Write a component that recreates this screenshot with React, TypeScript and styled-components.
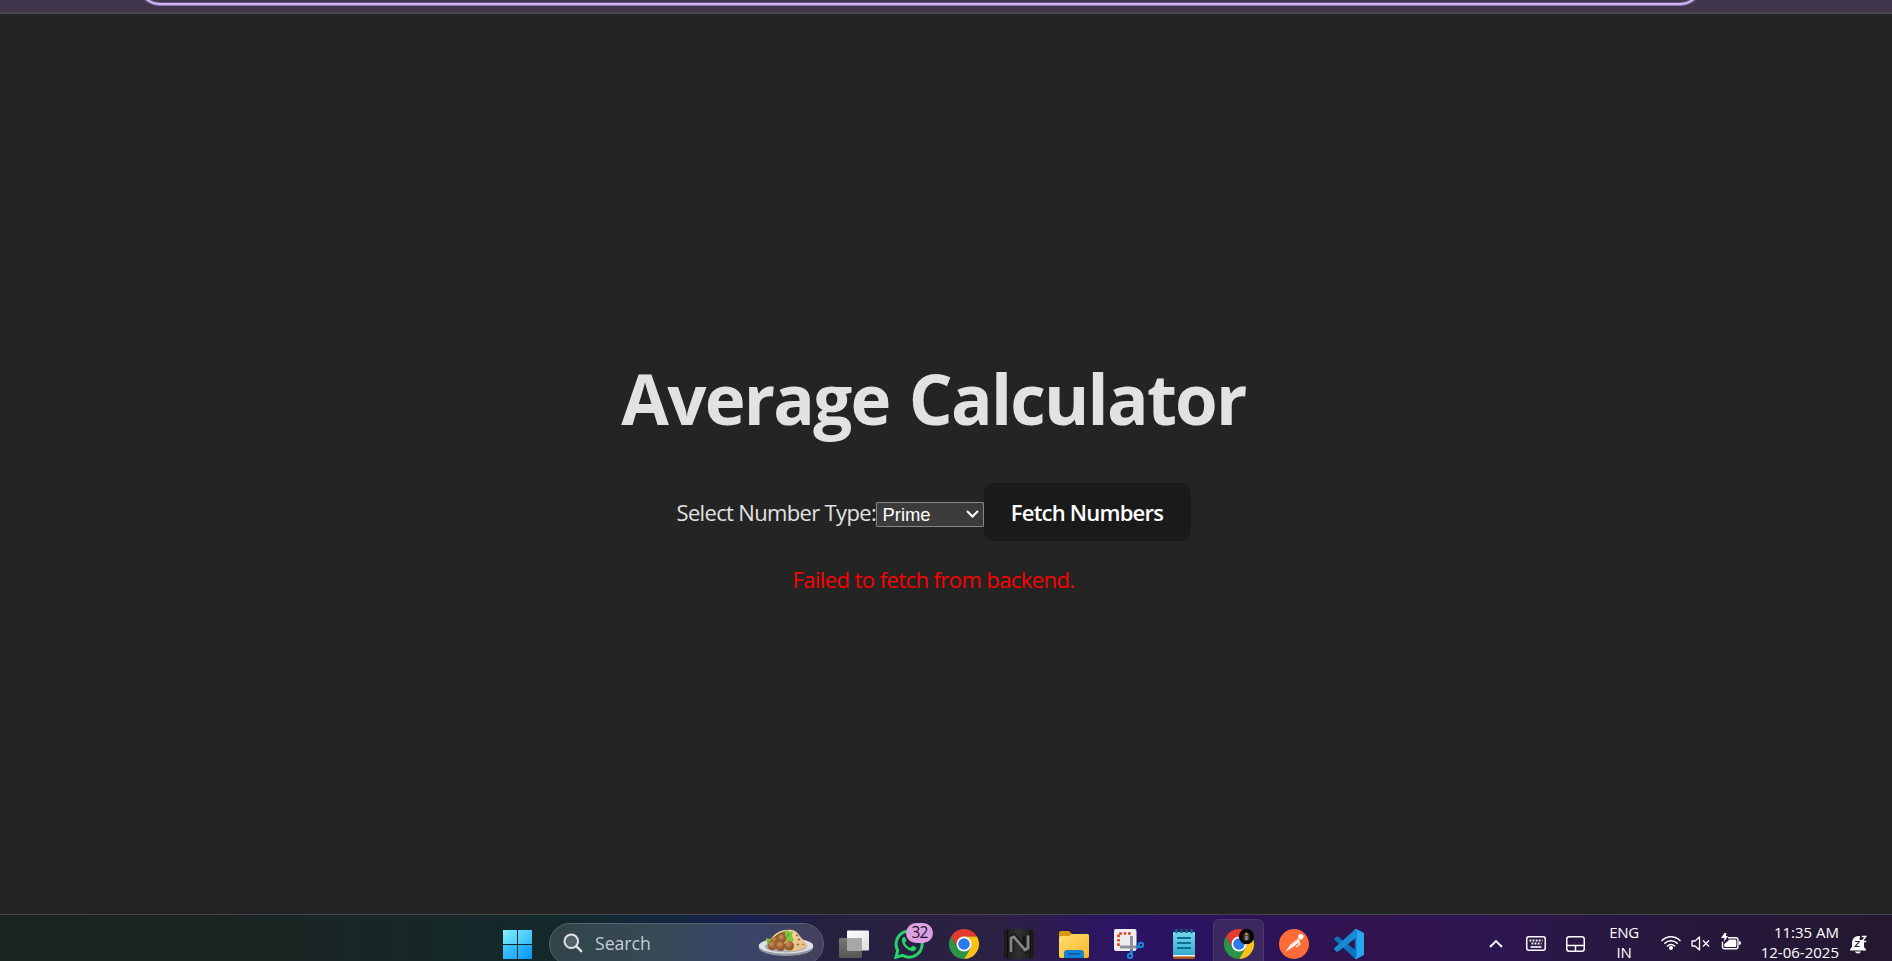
import React from "react";
import styled, { createGlobalStyle } from "styled-components";

const GlobalStyle = createGlobalStyle`
  * { box-sizing: border-box; }
  html, body { margin: 0; padding: 0; background: #242424; overflow: hidden; }
`;

const Screen = styled.div`
  display: flex;
  flex-direction: column;
  width: 1892px;
  height: 961px;
  overflow: hidden;
  background: #242424;
  font-family: "Open Sans", "Noto Sans", sans-serif;
`;

const BrowserBar = styled.header`
  flex: none;
  height: 14px;
  overflow: hidden;
  background: #40374d;
  border-bottom: 2px solid #48454e;
  display: flex;
  align-items: flex-end;
  padding: 0 190px 7px 138px;
`;

const AddressField = styled.div`
  flex: 1;
  height: 44px;
  border: 2px solid #d0b7fb;
  border-radius: 22px;
  box-shadow: 0 0 0 1px rgba(190, 160, 240, 0.6), inset 0 0 0 1px rgba(190, 160, 240, 0.25);
`;

const Page = styled.main`
  flex: 1;
  min-height: 0;
  display: flex;
  flex-direction: column;
  align-items: center;
  padding: 345px 25px 0 0;
  color: #e2e2e2;
`;

const Title = styled.h1`
  margin: 0;
  height: 78px;
  font-size: 69px;
  line-height: 78px;
  font-weight: 700;
  letter-spacing: -1.73px;
  word-spacing: 3px;
  white-space: nowrap;
`;

const Controls = styled.div`
  margin-top: 46px;
  height: 58px;
  display: flex;
  align-items: center;
`;

const Label = styled.label`
  width: 199px;
  font-size: 22px;
  line-height: 33px;
  letter-spacing: -0.66px;
  white-space: nowrap;
`;

const Select = styled.div`
  width: 108px;
  height: 25px;
  margin-top: 4px;
  padding: 0 4px 0 6px;
  display: flex;
  align-items: center;
  justify-content: space-between;
  background: #3b3b3b;
  border: 1px solid #858585;
  border-radius: 1px;
  color: #fff;
  font: 18.4px/23px "Liberation Sans", Arial, sans-serif;
`;

const FetchButton = styled.button`
  width: 207px;
  height: 58px;
  padding: 0;
  border: 0;
  border-radius: 11px;
  background: #1a1a1a;
  color: #fff;
  font: 600 22px/33px "Open Sans", "Noto Sans", sans-serif;
  letter-spacing: -0.78px;
  white-space: nowrap;
`;

const ErrorText = styled.p`
  margin: 22px 0 0;
  font-size: 22px;
  line-height: 33px;
  letter-spacing: -0.58px;
  color: #f00;
`;

const Taskbar = styled.footer`
  flex: none;
  height: 47px;
  overflow: hidden;
  display: flex;
  align-items: flex-start;
  border-top: 1px solid #45434b;
  background: linear-gradient(90deg, #1c2421 0, #1a2624 300px, #14292b 560px, #14253f 680px, #171f50 750px, #27203f 830px, #2c2144 1000px, #2c1466 1120px, #2c1360 1190px, #31134e 1370px, #2e1551 1480px, #291842 1600px, #23182f 1892px);
`;

const StartSlot = styled.div`
  margin: 15px 17px 0 503px;
  width: 29px;
  height: 29px;
  display: grid;
  grid-template-columns: 14px 14px;
  grid-template-rows: 14px 14px;
  gap: 1px;
`;

const Pane = styled.i<{ $from: string; $to: string }>`
  background: linear-gradient(135deg, ${(p) => p.$from}, ${(p) => p.$to});
`;

const SearchPill = styled.div`
  flex: none;
  width: 275px;
  height: 42px;
  margin-top: 8px;
  padding: 0 9px 2px 13px;
  display: flex;
  align-items: center;
  border-radius: 21px;
  border: 1px solid #53646e;
  background: linear-gradient(90deg, #33444a, #364a56 40%, #394569 70%, #45405d);
  color: #c6ced4;
  font-size: 17.6px;
`;

const SearchWord = styled.span`
  flex: 1;
  margin-left: 12px;
`;

const Apps = styled.nav`
  display: flex;
  margin-left: 2px;
`;

const AppSlot = styled.div<{ $active?: boolean }>`
  position: relative;
  width: 51px;
  height: 50px;
  margin: 4px 2px 0;
  display: flex;
  justify-content: center;
  padding-top: 9px;
  border-radius: 6px;
  border: 1px solid ${(p) => (p.$active ? "#49366a" : "transparent")};
  background: ${(p) => (p.$active ? "#3c2761" : "transparent")};
`;

const Badge = styled.span`
  position: absolute;
  left: 22px;
  top: 3px;
  width: 27px;
  height: 20px;
  border-radius: 10px;
  background: #dda0e3;
  color: #21172a;
  font-size: 15.5px;
  line-height: 19px;
  letter-spacing: -0.8px;
  text-align: center;
`;

const Tray = styled.div`
  flex: 1;
  display: flex;
  align-items: flex-start;
  color: #fff;
`;

const TrayIcon = styled.div<{ $left: number; $top: number }>`
  flex: none;
  margin: ${(p) => p.$top}px 0 0 ${(p) => p.$left}px;
  line-height: 0;
`;

const TrayText = styled.div<{ $left: number; $width: number; $align: string; $spacing?: number }>`
  flex: none;
  margin: 7px 0 0 ${(p) => p.$left}px;
  width: ${(p) => p.$width}px;
  text-align: ${(p) => p.$align};
  font-size: 15px;
  line-height: 20px;
  letter-spacing: ${(p) => p.$spacing ?? 0}px;
  white-space: nowrap;
`;

const SearchIcon = () => (
  <svg width="20" height="20" viewBox="0 0 20 20" fill="none" stroke="#dfe4e7" strokeWidth="2">
    <circle cx="8.3" cy="8.3" r="6.8" fill="#53616a" />
    <path d="m13.2 13.2 5 5" strokeWidth="2.4" strokeLinecap="round" />
  </svg>
);

const FoodPlate = () => (
  <svg width="56" height="28" viewBox="0 0 56 28">
    <defs>
      <radialGradient id="ball" cx="40%" cy="30%">
        <stop offset="0" stopColor="#d0935a" />
        <stop offset="1" stopColor="#92592b" />
      </radialGradient>
      <linearGradient id="wrap" x2="1" y2="1">
        <stop offset="0" stopColor="#fae3b8" />
        <stop offset="1" stopColor="#e3b97f" />
      </linearGradient>
    </defs>
    <ellipse cx="28" cy="18.5" rx="27.3" ry="8.5" fill="#9295a2" />
    <ellipse cx="28" cy="16.8" rx="27.3" ry="7.8" fill="#dfe1e8" />
    <ellipse cx="28" cy="17.5" rx="21" ry="5.9" fill="#a9adba" />
    <path d="M13 9Q21 0 32 .8q5 0 8 4l10 12q-8 7-22 5Z" fill="url(#wrap)" />
    <path d="M15 9q7-7 15-7l-3 7-9 4Z" fill="#8c6230" />
    <path d="m27 2 3-1 1 2 4-1-1 5 2 4-4 4-5-5ZM8 9l4 1 4-2-1 5-5 5-1-4Z" fill="#7fc83b" />
    <path d="m29 6 3-3-2 6ZM10 12l4-1-3 3Z" fill="#55a333" />
    <g fill="url(#ball)">
      <circle cx="16.5" cy="11.5" r="3.8" />
      <circle cx="24" cy="9.7" r="4.5" />
      <circle cx="14.3" cy="16.8" r="4.5" />
      <circle cx="31.2" cy="16.8" r="4.8" />
      <circle cx="22.5" cy="17.2" r="4.9" />
    </g>
    <path d="m38 6 2 1m0 4 2-1m-3 6 2-1m4 1 1-1" stroke="#9c683b" strokeWidth="1.4" />
  </svg>
);

const TaskViewIcon = () => (
  <svg width="30" height="30" viewBox="0 0 30 30">
    <defs>
      <linearGradient id="tv" x2="1" y2="1">
        <stop offset="0" stopColor="#fff" /><stop offset="1" stopColor="#dedede" />
      </linearGradient>
      <linearGradient id="tvBack" x2="0" y2="1">
        <stop offset="0" stopColor="#777" /><stop offset="1" stopColor="#555" />
      </linearGradient>
    </defs>
    <rect y="9" width="23" height="20" rx="1" fill="url(#tvBack)" />
    <rect x="8" y="1.5" width="22" height="20" rx="1" fill="url(#tv)" />
    <path d="M8 9h14q1 0 1 1v11.5H8Z" fill="#a7a7a7" />
  </svg>
);

const WhatsAppIcon = () => (
  <svg width="30" height="30" viewBox="0 0 30 30">
    <path d="M2 28.2 3.8 21.5A13 13 0 1 1 8.7 26.4Z" fill="none" stroke="#25d366" strokeWidth="3" />
    <path d="M10.2 7.8c-.6 0-2.5 1.2-2.4 3.7.1 4.8 6.4 10.4 10.6 10.7 2.3.1 4-1.4 4-3.3 0-.7-3.2-2.3-3.8-2.2-.8 0-1.5 2.2-2.3 2-1.9-.3-5-3.4-5.2-5 0-.7 1.4-1.3 1.3-2.1-.1-.7-1.3-3.8-2.2-3.8Z" fill="#25d366" />
  </svg>
);

const ChromeIcon = ({ avatar = false }: { avatar?: boolean }) => (
  <svg width="30" height="30" viewBox="0 0 48 48" overflow="visible">
    <path d="M3.2 12a24 24 0 0 1 41.6 0H24L13.6 30Z" fill="#e33b2e" />
    <path d="M44.8 12A24 24 0 0 1 24 48L34.4 30 24 12Z" fill="#fbc116" />
    <path d="M24 48A24 24 0 0 1 3.2 12L13.6 30h20.8Z" fill="#2a9547" />
    <circle cx="24" cy="24" r="12" fill="#fff" />
    <circle cx="24" cy="24" r="9.3" fill="#2b79ed" />
    {avatar && (
      <g>
        <circle cx="36" cy="12" r="12.3" fill="#080706" />
        <path d="M31 9q5-8 10 0v9H31Z" fill="#4a3828" />
        <circle cx="36" cy="8" r="2.2" fill="#b58847" />
        <path d="M34 11h4v7h-4Z" fill="#8d8794" />
      </g>
    )}
  </svg>
);

const NIcon = () => (
  <svg width="30" height="30" viewBox="0 0 30 30">
    <defs>
      <linearGradient id="nbg"><stop offset="0" stopColor="#1b1b1b" /><stop offset=".5" stopColor="#303030" /><stop offset="1" stopColor="#1b1b1b" /></linearGradient>
    </defs>
    <rect width="30" height="30" rx="4" fill="url(#nbg)" />
    <path d="M3.5 1v28M26.5 1v28" stroke="#0d0d0d" />
    <path d="M7 23V9l3-1.5 11 12V7" fill="none" stroke="#171717" strokeWidth="5" />
    <path d="M7 23V9l3-1 11 13 3-2V6.5" fill="none" stroke="#858585" strokeWidth="2.8" />
  </svg>
);

const FolderIcon = () => (
  <svg width="30" height="30" viewBox="0 0 30 30">
    <defs>
      <linearGradient id="folder" x2="1" y2="1"><stop offset="0" stopColor="#ffdf70" /><stop offset="1" stopColor="#fcb827" /></linearGradient>
    </defs>
    <path d="M0 4q0-2 2-2h8l3 3h15q2 0 2 2v6H0Z" fill="#dc9700" />
    <path d="M0 9q0-2 2-2h8l3-2h15q2 0 2 2v20q0 2-2 2H2q-2 0-2-2Z" fill="url(#folder)" />
    <path d="M5 29v-5q0-3 3-3h14q3 0 3 3v5Z" fill="#1682d4" />
    <path d="M9 24.8h12" stroke="#0850a0" strokeWidth="1.4" />
  </svg>
);

const SnipIcon = () => (
  <svg width="30" height="30" viewBox="0 0 30 30">
    <rect width="22.5" height="22" rx="2" fill="#eeedf0" />
    <path d="M4.5 17V4.5H17" fill="none" stroke="#db4220" strokeWidth="2.7" strokeDasharray="2.7 1.7" />
    <path d="M17.5 7v16M6 18h16" stroke="#8e9499" strokeWidth="3" />
    <path d="M22 18h3" stroke="#1583d3" strokeWidth="3" />
    <path d="M17.5 21v4" stroke="#1583d3" strokeWidth="3" />
    <circle cx="27" cy="16" r="2.2" fill="none" stroke="#1888dd" strokeWidth="2" />
    <circle cx="16" cy="27" r="2.2" fill="none" stroke="#1888dd" strokeWidth="2" />
  </svg>
);

const NotepadIcon = () => (
  <svg width="30" height="30" viewBox="0 0 30 30">
    <defs><linearGradient id="note" x2="0" y2="1"><stop offset="0" stopColor="#72d9ed" /><stop offset="1" stopColor="#36a9c9" /></linearGradient></defs>
    <path d="M4 3h22v24H4Z" fill="url(#note)" />
    <path d="M4 26h22v2q0 2-2 2H6q-2 0-2-2Z" fill="#a85518" />
    <path d="M4 26h22v1.5H4Z" fill="#f4f5f5" />
    <path d="M8 9h14M8 14h14M8 19h14" stroke="#087193" strokeWidth="2" />
    <path d="M7.5 3V1m5 2V1m5 2V1m5 2V1" stroke="#176681" strokeWidth="2.5" strokeLinecap="round" />
  </svg>
);

const PostmanIcon = () => (
  <svg width="30" height="30" viewBox="0 0 30 30">
    <circle cx="15" cy="15" r="15" fill="#ff6c37" />
    <circle cx="21.8" cy="7.8" r="2.7" fill="#fff" />
    <path d="m19 9.5-7.5 6 2.7 2.4 7-6Z" fill="#fff" />
    <path d="m11.5 15.5-5 7.3 7.7-5Z" fill="#fff" />
    <path d="m19 13 2 2-4 3" fill="none" stroke="#fff" strokeWidth="1.2" />
    <path d="M19 10.5 13 16" stroke="#f3a184" strokeWidth=".8" />
  </svg>
);

const VSCodeIcon = () => (
  <svg width="30" height="30" viewBox="0 0 100 100">
    <path d="m75 1 20 10q5 2 5 7v64q0 5-5 7L75 99q-4 2-7-2L2 37q-3-3 0-6l6-5q3-2 6 0l55 42V32L14 74q-3 2-6 0l-6-5q-3-3 0-6L68 3q3-4 7-2Z" fill="#0b75bc" />
    <path d="m75 1 20 10q5 2 5 7v64q0 5-5 7L75 99q-4 2-7-2l7-3V6l-7-3q3-4 7-2Z" fill="#29a6f2" />
    <path d="m2 63 66-60q7 3 7 13v12L14 74q-3 2-6 0l-6-5q-3-3 0-6Z" fill="#1989d2" />
  </svg>
);

const ChevronUp = () => (
  <svg width="14" height="8" viewBox="0 0 14 8" fill="none" stroke="#fff" strokeWidth="1.8"><path d="m1 7 6-6 6 6" /></svg>
);

const SelectArrow = () => (
  <svg width="13" height="8" viewBox="0 0 13 8" fill="none" stroke="#fff" strokeWidth="2"><path d="m1 1 5.5 5.5L12 1" /></svg>
);

const KeyboardIcon = () => (
  <svg width="20" height="15" viewBox="0 0 20 15" fill="none" stroke="#fff">
    <rect x=".75" y=".75" width="18.5" height="13.5" rx="2" strokeWidth="1.5" />
    <path d="M3.5 4.5h13M5.5 7.5h10" strokeWidth="1.8" strokeDasharray="1.8 1.3" />
    <path d="M4.5 11h11" strokeWidth="1.6" />
  </svg>
);

const TouchpadIcon = () => (
  <svg width="19" height="16" viewBox="0 0 19 16" fill="none" stroke="#fff" strokeWidth="1.5">
    <rect x=".75" y=".75" width="17.5" height="14.5" rx="2.5" /><path d="M1 9.5h17M9.5 9.5V15" />
  </svg>
);

const WifiIcon = () => (
  <svg width="20" height="15" viewBox="0 0 20 15" fill="none" stroke="#fff" strokeWidth="1.6" strokeLinecap="round">
    <path d="M1 5.5a12.6 12.6 0 0 1 18 0M3.8 8.3a8.7 8.7 0 0 1 12.4 0M6.5 11a5 5 0 0 1 7 0" />
    <circle cx="10" cy="13" r="1.2" fill="#fff" />
  </svg>
);

const MutedIcon = () => (
  <svg width="19" height="15" viewBox="0 0 19 15" fill="none" stroke="#fff" strokeWidth="1.3">
    <path d="M1 5h3l4.5-4v13L4 10H1Z" strokeLinejoin="round" /><path d="m12 4.5 6 6m0-6-6 6" />
  </svg>
);

const BatteryIcon = () => (
  <svg width="20" height="17" viewBox="0 0 20 17">
    <path d="M7 4.7h8q2 0 2 2v7q0 2-2 2H3.5q-2 0-2-2v-5" fill="none" stroke="#fff" strokeWidth="1.4" />
    <path d="M8 6.5h6.3q1 0 1 1v5.5q0 1-1 1H4.2q-1 0-1-1v-2L7 8Z" fill="#fff" />
    <path d="M18 8q2 0 2 2t-2 2ZM3.5 0h2L4.8 3H7L3 9l.4-4H0Z" fill="#fff" />
  </svg>
);

const BellIcon = () => (
  <svg width="17" height="19" viewBox="0 0 17 19">
    <path d="M2 8q0-6 6-7h2l-.5 4H14v7l2 2.5v1H0v-1L2 12Z" fill="#fff" />
    <path d="M5 16.5h6q-.5 2-3 2t-3-2Z" fill="#fff" />
    <path d="M5.2 6.5h4l-4 5h4.5" fill="none" stroke="#2b1b3c" strokeWidth="1.2" />
    <path d="M11.8 1.5h4l-4 5h4.4" fill="none" stroke="#fff" strokeWidth="1.3" />
  </svg>
);

export default function App() {
  return (
    <Screen>
      <GlobalStyle />
      <BrowserBar><AddressField /></BrowserBar>
      <Page>
        <Title>Average Calculator</Title>
        <Controls>
          <Label>Select Number Type:</Label>
          <Select>Prime<SelectArrow /></Select>
          <FetchButton>Fetch Numbers</FetchButton>
        </Controls>
        <ErrorText>Failed to fetch from backend.</ErrorText>
      </Page>
      <Taskbar>
        <StartSlot>
          <Pane $from="#83f0ff" $to="#44cbfa" /><Pane $from="#67dcfd" $to="#30bdf8" />
          <Pane $from="#45c9f8" $to="#1ba8f7" /><Pane $from="#31b8f8" $to="#0798f5" />
        </StartSlot>
        <SearchPill>
          <SearchIcon />
          <SearchWord>Search</SearchWord>
          <FoodPlate />
        </SearchPill>
        <Apps>
          <AppSlot><TaskViewIcon /></AppSlot>
          <AppSlot><WhatsAppIcon /><Badge>32</Badge></AppSlot>
          <AppSlot><ChromeIcon /></AppSlot>
          <AppSlot><NIcon /></AppSlot>
          <AppSlot><FolderIcon /></AppSlot>
          <AppSlot><SnipIcon /></AppSlot>
          <AppSlot><NotepadIcon /></AppSlot>
          <AppSlot $active><ChromeIcon avatar /></AppSlot>
          <AppSlot><PostmanIcon /></AppSlot>
          <AppSlot><VSCodeIcon /></AppSlot>
        </Apps>
        <Tray>
          <TrayIcon $left={113} $top={25}><ChevronUp /></TrayIcon>
          <TrayIcon $left={23} $top={21}><KeyboardIcon /></TrayIcon>
          <TrayIcon $left={20} $top={21}><TouchpadIcon /></TrayIcon>
          <TrayText $left={15} $width={48} $align="center" $spacing={-0.3}>ENG<br />IN</TrayText>
          <TrayIcon $left={13} $top={20}><WifiIcon /></TrayIcon>
          <TrayIcon $left={10} $top={21}><MutedIcon /></TrayIcon>
          <TrayIcon $left={11} $top={18}><BatteryIcon /></TrayIcon>
          <TrayText $left={8} $width={90} $align="right">11:35 AM<br />12-06-2025</TrayText>
          <TrayIcon $left={11} $top={20}><BellIcon /></TrayIcon>
        </Tray>
      </Taskbar>
    </Screen>
  );
}
